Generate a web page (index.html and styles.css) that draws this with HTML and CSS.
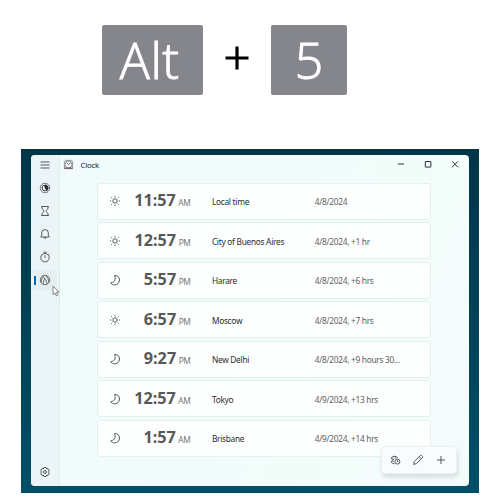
FILE: index.html
```
<!DOCTYPE html>
<html lang="en">
<head>
<meta charset="utf-8">
<title>Clock</title>
<link rel="stylesheet" href="styles.css">
</head>
<body>
<svg class="defs" aria-hidden="true">
  <symbol id="sun" viewBox="0 0 12 12"><circle cx="6" cy="6" r="2.200"/><path d="M6 1v1.200M6 9.800V11M1 6h1.200M9.800 6H11M2.300 2.300l.9.900M8.800 8.800l.9.900M2.300 9.700l.9-.9M8.800 3.200l.9-.9"/></symbol>
  <symbol id="moon" viewBox="0 0 12 12"><path d="M5.700 1.500C8.600 1.300 10.600 3.400 10.500 6c-.1 2.900-2.300 4.900-4.900 4.900-1.700 0-3-.7-3.900-2C4.200 8.400 5.500 7.500 5.900 5.900c.4-1.600.3-2.900-.2-4.400z"/></symbol>
</svg>
<header class="shortcut">
  <kbd class="key key-alt"><span>Alt</span></kbd>
  <svg class="plus" viewBox="0 0 24 24"><path d="M12 .5v23M.5 12h23"/></svg>
  <kbd class="key key-five"><span>5</span></kbd>
</header>
<main class="desktop">
  <div class="window">
    <nav class="rail">
      <svg class="menu" viewBox="0 0 12 12"><path d="M1.500 3h9M1.500 6h9M1.500 9h9"/></svg>
      <svg class="focus" viewBox="0 0 12 12"><circle cx="6" cy="6" r="4.700" stroke-dasharray="1.500 .5"/><circle cx="6" cy="6" r="2.900"/><path class="solid" d="M6 3v3l2 2.300A3 3 0 0 0 6 3z"/></svg>
      <svg class="timer" viewBox="0 0 12 12"><path d="M2.200 1.500h7.600M2.200 10.500h7.600M3 1.500v1.700c0 1.200 1.900 1.700 1.900 2.800S3 7.600 3 8.800v1.700M9 1.500v1.700C9 4.400 7.100 4.900 7.100 6S9 7.600 9 8.800v1.700"/></svg>
      <svg class="alarm" viewBox="0 0 12 12"><path d="M2.700 7.300V4.900a3.300 3.300 0 0 1 6.600 0v2.400l.9 1.700H1.800zM4.700 9.200c.2 1.500 2.400 1.500 2.600 0"/></svg>
      <svg class="stopwatch" viewBox="0 0 12 12"><circle cx="6" cy="6.700" r="4.200"/><path d="M4.400 1.200h3.200M6 4.200v2.700M9.400 2.600l1 1"/></svg>
      <div class="active-item">
        <svg class="world" viewBox="0 0 12 12"><circle cx="6" cy="6" r="4.700"/><path d="M2.200 8.300c.1-2.600 1-4.600 2.600-5.800M9.800 8.300C9.700 5.500 8.600 3.200 6.900 2M4.300 9.800c0-2 .6-3.500 1.700-4.600 1.200 1.100 1.800 2.600 1.800 4.500M6 5.200L4.200 2.500"/></svg>
      </div>
      <svg class="settings" viewBox="0 0 12 12"><path d="M4.800 1.500h2.400l.4 1.400 1.500-.3 1.200 2.100L9.300 6l1 1.300-1.200 2.100-1.500-.3-.4 1.400H4.800l-.4-1.400-1.500.3-1.200-2.100 1-1.300-1-1.300 1.200-2.100 1.500.3z"/><circle cx="6" cy="6" r="1.400"/></svg>
    </nav>
    <section class="content">
      <div class="titlebar">
        <svg class="app-icon" viewBox="0 0 12 12"><path class="case" d="M3 1.500h6.500l1 1.500v7.500h-9V3z"/><circle class="dial" cx="6" cy="6" r="3.700"/><path class="base" d="M1.600 10h8.900"/><path class="hand" d="M4 4.100l2 2 2.400-2.200"/></svg>
        <span class="title">Clock</span>
        <svg class="min" viewBox="0 0 10 10"><path d="M2 4h6"/></svg>
        <svg class="max" viewBox="0 0 10 10"><rect x="2.300" y="1.500" width="5.600" height="5.600" rx=".3"/></svg>
        <svg class="close" viewBox="0 0 10 10"><path d="M2 1.300l6 6M8 1.300l-6 6"/></svg>
      </div>
      <div class="cities">
        <article class="row"><svg><use href="#sun"/></svg><div class="time"><b>11:57</b><small>AM</small></div><span class="city">Local time</span><span class="date">4/8/2024</span></article>
        <article class="row"><svg><use href="#sun"/></svg><div class="time"><b>12:57</b><small>PM</small></div><span class="city">City of Buenos Aires</span><span class="date">4/8/2024, +1 hr</span></article>
        <article class="row"><svg><use href="#moon"/></svg><div class="time"><b>5:57</b><small>PM</small></div><span class="city">Harare</span><span class="date">4/8/2024, +6 hrs</span></article>
        <article class="row"><svg><use href="#sun"/></svg><div class="time"><b>6:57</b><small>PM</small></div><span class="city">Moscow</span><span class="date">4/8/2024, +7 hrs</span></article>
        <article class="row"><svg><use href="#moon"/></svg><div class="time"><b>9:27</b><small>PM</small></div><span class="city">New Delhi</span><span class="date">4/8/2024, +9 hours 30...</span></article>
        <article class="row"><svg><use href="#moon"/></svg><div class="time"><b>12:57</b><small>AM</small></div><span class="city">Tokyo</span><span class="date">4/9/2024, +13 hrs</span></article>
        <article class="row"><svg><use href="#moon"/></svg><div class="time"><b>1:57</b><small>AM</small></div><span class="city">Brisbane</span><span class="date">4/9/2024, +14 hrs</span></article>
      </div>
    </section>
    <div class="actions">
      <svg viewBox="0 0 12 12"><path d="M5.500 9.800A4 4 0 0 1 2 7.700M2 4.500A4 4 0 0 1 8.700 3.700M2 4.500c1 .9 2.300.5 2.300-.5M2 7.700c.9-1 2.100-.9 2.800-.3M6.300 2.300c-.6 1 0 1.800 1 1.900M3.300 6.200l1.800-.7"/><circle cx="8.400" cy="7.600" r="2.500"/><path d="M8.300 6.300v1.500h1"/></svg>
      <svg viewBox="0 0 12 12"><path d="M1.600 10.400l.7-2.800 5.900-5.900c.5-.5 1.200-.5 1.700 0l.4.400c.5.500.5 1.200 0 1.700L4.400 9.700zM7.300 2.600l2.100 2.100"/></svg>
      <svg viewBox="0 0 12 12"><path d="M6 2v8M2 6h8"/></svg>
    </div>
    <svg class="cursor" viewBox="0 0 8 12"><path d="M1 1v8.500l2-1.800 1.300 3.200 1.500-.7-1.400-3h2.700z"/></svg>
  </div>
</main>
</body>
</html>
```
FILE: styles.css
```
* { box-sizing: border-box; }
body {
  margin: 0;
  width: 500px;
  height: 500px;
  overflow: hidden;
  background: #fff;
  font-family: "Noto Sans", "Open Sans", sans-serif;
}
svg { display: block; flex: none; fill: none; stroke: #44484a; stroke-width: .9; stroke-linejoin: round; }
.defs { position: absolute; width: 0; height: 0; }

.shortcut { display: flex; align-items: center; height: 149px; padding: 0 0 29px 101.500px; }
.key {
  display: flex;
  align-items: center;
  justify-content: center;
  height: 70.500px;
  border-radius: 2px;
  background: #85868b;
  color: #fff;
  font: 300 50px/70px "Open Sans", "Noto Sans", sans-serif;
  -webkit-text-stroke: 1px #fff;
}
.key-alt { width: 101.500px; padding-right: 5px; letter-spacing: .6px; }
.key-five { width: 76px; }
.plus { width: 24px; height: 24px; margin: -4px 22.500px 0 21.500px; stroke: #000; stroke-width: 3.200; }

.desktop {
  width: 458px;
  height: 344px;
  margin-left: 21px;
  padding: 5.500px 10px 7px;
  background: linear-gradient(#003548, #005067);
}
.window {
  position: relative;
  display: flex;
  width: 438px;
  height: 331px;
  border-radius: 4px;
  background: linear-gradient(110deg, #f1fafb, #f1fdfa 60%, #f4fcfb);
}
.rail {
  display: flex;
  flex-direction: column;
  align-items: center;
  width: 28.500px;
  padding: 4.500px 0 8px;
  border-right: 1px solid #e0ebee;
  border-radius: 4px 0 0 4px;
  background: #ebf5f8;
}
.rail svg { width: 12px; height: 12px; }
.rail .focus { margin-top: 10.500px; stroke: #292d30; }
.rail .solid { fill: #292d30; }
.rail .timer { margin-top: 11px; }
.rail .alarm { margin-top: 11px; }
.rail .stopwatch { margin-top: 11.500px; }
.active-item {
  display: flex;
  align-items: center;
  justify-content: center;
  width: 24px;
  height: 21px;
  margin-top: 6.800px;
  border-radius: 3px;
  background: linear-gradient(#0067c0, #0067c0) 1px 50% / 2px 9px no-repeat, #e5eef1;
}
.rail .world { stroke-width: .8; }
.rail .settings { margin-top: auto; }

.content { flex: 1; }
.titlebar { display: flex; align-items: center; height: 20px; padding-left: 3px; }
.titlebar svg { width: 10px; height: 10px; stroke: #2e3234; stroke-width: 1; }
.titlebar .app-icon { width: 11px; height: 11px; stroke-width: .8; stroke: #777b7e; }
.case { fill: #dadde0; }
.dial { fill: #f6f7f8; }
.titlebar .base { stroke: #6c5a50; stroke-width: 1.300; }
.titlebar .hand { stroke: #303438; }
.title { width: 300px; margin-left: 7px; color: #252829; font-size: 7.800px; line-height: 10px; letter-spacing: -.2px; }
.titlebar .min { margin-left: 15.200px; }
.titlebar .max, .titlebar .close { margin-left: 17px; }

.cities { display: flex; flex-direction: column; gap: 2.500px; width: 334.500px; margin: 8px 0 0 37.400px; }
.row {
  display: grid;
  grid-template-columns: 12px 70.500px 102.800px 110px;
  align-items: center;
  height: 37px;
  padding-left: 11.500px;
  border: 1px solid #e6efef;
  border-radius: 3px;
  background: #fdfefe;
  font-size: 8.300px;
  line-height: 12px;
  letter-spacing: -.27px;
  white-space: nowrap;
}
.row svg { width: 12px; height: 12px; }
.time { display: flex; align-items: baseline; justify-content: flex-end; gap: 2.500px; padding: 1.500px 1.300px 0 0; color: #585858; line-height: 20px; letter-spacing: 0; }
.time b { font-size: 16.200px; }
.time small { color: #777; font-size: 8.300px; letter-spacing: -.3px; }
.city { padding: 2px 0 0 20px; color: #2c2c2c; }
.date { padding: 2px 0 0 20px; color: #606060; }

.actions {
  position: absolute;
  right: 12.400px;
  bottom: 12px;
  display: flex;
  align-items: center;
  gap: 11px;
  width: 75.500px;
  height: 28px;
  padding-left: 7px;
  border: 1px solid #ecf0f2;
  border-radius: 4px;
  background: #f9fbfc;
  box-shadow: 1px 3px 5px #0002;
}
.actions svg { width: 12px; height: 12px; }
.cursor { position: absolute; left: 21px; top: 130px; width: 8px; height: 12px; fill: #fff; stroke: #777; }
```
